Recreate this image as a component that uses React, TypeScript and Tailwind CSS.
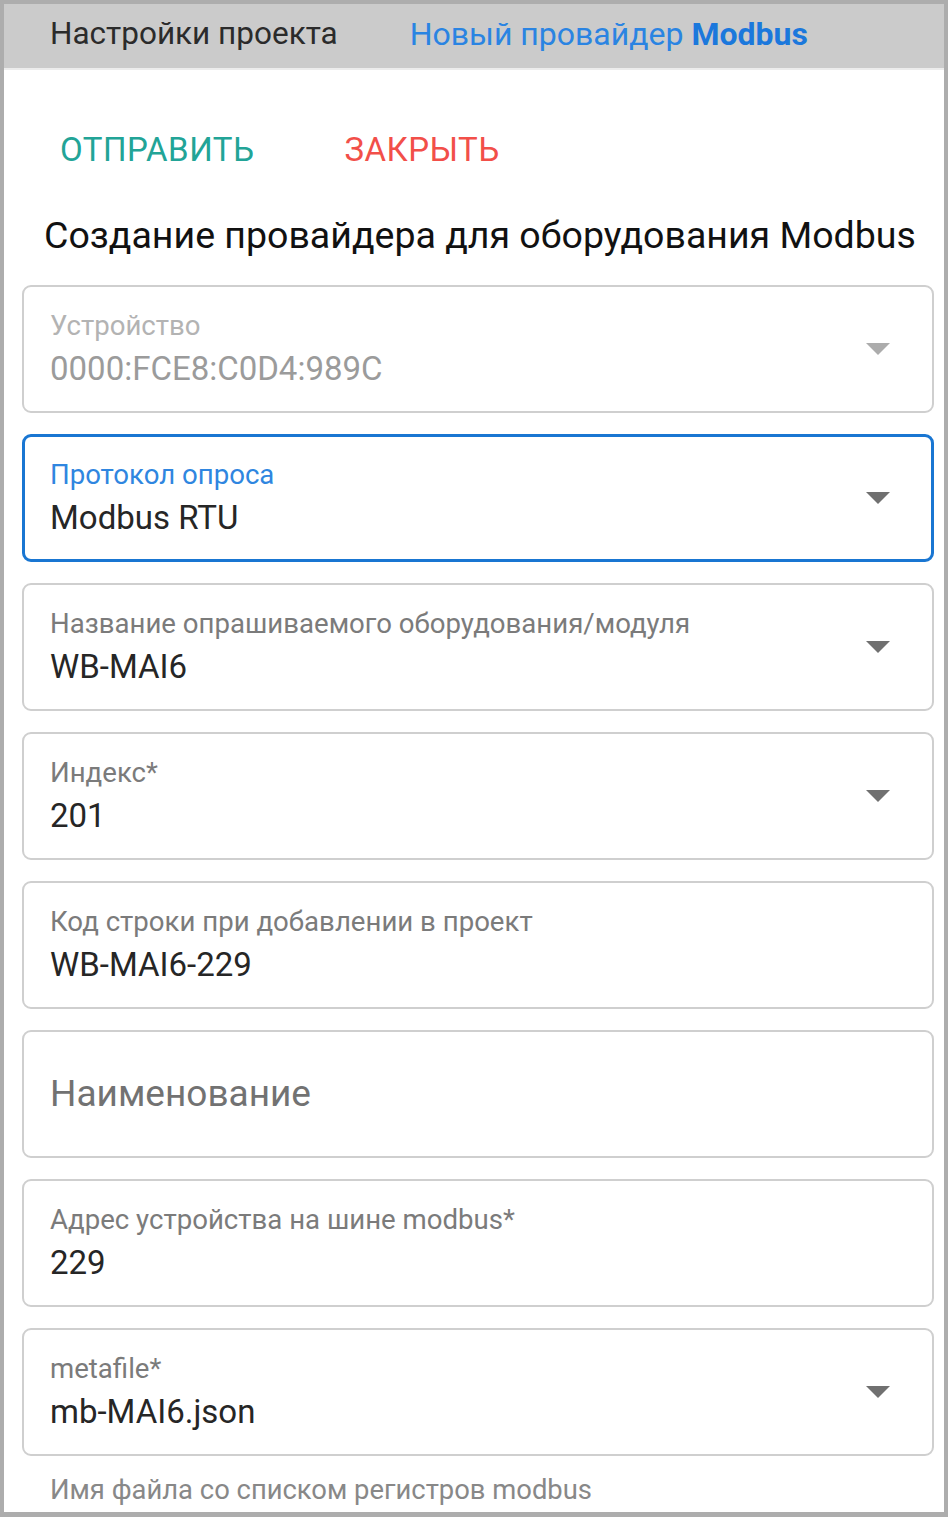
import React from 'react';

interface FieldProps {
  label?: string;
  value?: string;
  placeholder?: string;
  select?: boolean;
  focused?: boolean;
  disabled?: boolean;
}

function Caret({ disabled }: { disabled?: boolean }) {
  return (
    <svg width="24" height="12" viewBox="0 0 24 12" className="shrink-0">
      <path d="M0 0 L24 0 L12 12 Z" fill={disabled ? '#acacac' : '#707070'} />
    </svg>
  );
}

function Field({ label, value, placeholder, select, focused, disabled }: FieldProps) {
  const box = focused
    ? 'border-[3px] border-[#1976d2]'
    : 'border-2 border-[#cfcfcf]';
  return (
    <div className={`h-[128px] rounded-[9px] ${box} flex items-center ${focused ? 'pl-[25px] pr-[41px]' : 'pl-[26px] pr-[42px]'}`}>
      {placeholder ? (
        <div className="flex-1 text-[37px] leading-[44px] text-[#727272]">{placeholder}</div>
      ) : (
        <div className="flex-1 flex flex-col">
          <div
            className={`text-[27.6px] leading-[32px] ${
              disabled ? 'text-[#b3b3b3]' : focused ? 'text-[#2f86e0]' : 'text-[#7b7b7b]'
            }`}
          >
            {label}
          </div>
          <div className={`mt-[8px] text-[33px] leading-[38px] ${disabled ? 'text-[#9b9b9b]' : 'text-[#262626]'}`}>
            {value}
          </div>
        </div>
      )}
      {select && <Caret disabled={disabled} />}
    </div>
  );
}

const fields: FieldProps[] = [
  { label: 'Устройство', value: '0000:FCE8:C0D4:989C', select: true, disabled: true },
  { label: 'Протокол опроса', value: 'Modbus RTU', select: true, focused: true },
  { label: 'Название опрашиваемого оборудования/модуля', value: 'WB-MAI6', select: true },
  { label: 'Индекс*', value: '201', select: true },
  { label: 'Код строки при добавлении в проект', value: 'WB-MAI6-229' },
  { placeholder: 'Наименование' },
  { label: 'Адрес устройства на шине modbus*', value: '229' },
  { label: 'metafile*', value: 'mb-MAI6.json', select: true },
];

export default function App() {
  return (
    <div
      className="w-[948px] h-[1517px] bg-[#adadad] pt-[4px] pl-[4px] pr-[4px] pb-[5px] overflow-hidden"
      style={{ fontFamily: 'Roboto, "Noto Sans", sans-serif' }}
    >
      <div className="h-full bg-white overflow-hidden flex flex-col">
        <div className="h-[60px] shrink-0 bg-[#cbcbcb] flex items-center pl-[46px] pb-[4px] text-[31.5px] border-b-2 border-[#ececec] box-content">
          <span className="text-[#2b2b2b]">Настройки проекта</span>
          <span className="ml-[72px] text-[#2a84e2] text-[32px]">
            Новый провайдер <span className="font-bold text-[#1b78dc]">Modbus</span>
          </span>
        </div>

        <div className="flex items-center h-[80px] mt-[40px] pl-[56px] text-[33px] tracking-[0.5px]">
          <span className="text-[#22a497]">ОТПРАВИТЬ</span>
          <span className="ml-[90px] text-[#f24f49]">ЗАКРЫТЬ</span>
        </div>

        <div className="pl-[40px] mt-[22px] text-[37.5px] leading-[46px] text-[#111]">
          Создание провайдера для оборудования Modbus
        </div>

        <div className="mt-[27px] ml-[18px] mr-[10px] flex flex-col gap-[21px]">
          {fields.map((f, i) => (
            <Field key={i} {...f} />
          ))}
        </div>

        <div className="ml-[46px] mt-[18px] text-[27.4px] leading-[32px] text-[#888]">
          Имя файла со списком регистров modbus
        </div>
      </div>
    </div>
  );
}
